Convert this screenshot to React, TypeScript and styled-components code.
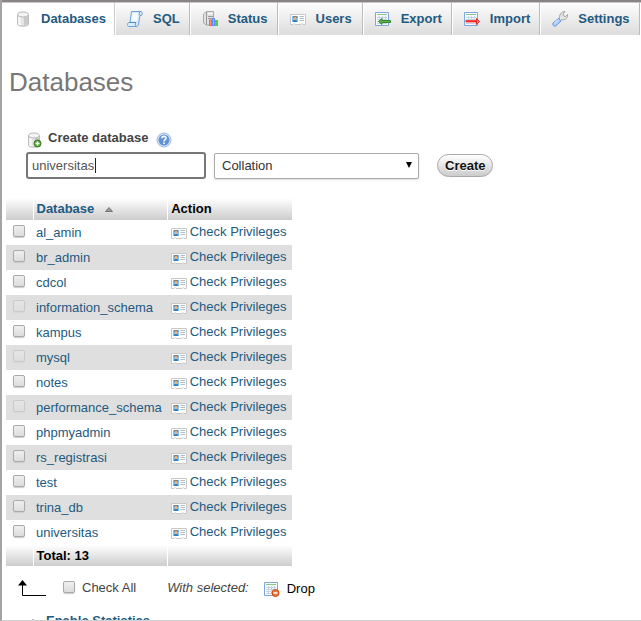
import React from 'react';
import styled, { createGlobalStyle } from 'styled-components';

const GlobalStyle = createGlobalStyle`
  * { box-sizing: border-box; }
  html { height: 100%; overflow: hidden; }
  body {
    margin: 0;
    background: #fff;
    color: #444;
    font: 13px/16px "Liberation Sans", Arial, sans-serif;
  }
  a { color: #235a81; text-decoration: none; }
  svg { display: block; flex: none; }
`;

const Page = styled.div`
  height: 100vh;
  overflow: hidden;
  border-left: 2px solid #a3a3a3;
  border-bottom: 1px solid #d0d0d0;
`;

const TabBar = styled.nav`
  display: flex;
  height: 35px;
  border-top: 2px solid #888486;
  box-shadow: inset 0 1px #c9c7c8;
  padding-top: 1px;
  white-space: nowrap;
  overflow: hidden;
`;

const Tab = styled.a<{ $active?: boolean }>`
  display: flex;
  align-items: center;
  flex: none;
  gap: 10px;
  padding: 0 9px 0 12px;
  border-right: 1px solid ${p => (p.$active ? '#ccc' : '#bbb')};
  box-shadow: ${p => (p.$active ? 'none' : 'inset 1px 0 #fff')};
  background: ${p => (p.$active ? '#fff' : 'linear-gradient(#fdfdfd, #dcdcdc)')};
  font-weight: bold;

  &:first-child { padding-left: 13px; padding-right: 8px; }
  &:nth-child(4) { padding-right: 10px; }
`;

const TabFill = styled.div`
  flex: 1;
  background: linear-gradient(#fdfdfd, #dcdcdc);
  box-shadow: inset 1px 0 #fff;
`;

const Title = styled.h1`
  margin: 32px 7px 33px;
  color: #777;
  font-size: 26px;
  line-height: 30px;
  font-weight: normal;
`;

const CreateForm = styled.form`
  margin-left: 24px;
`;

const FormHeading = styled.div`
  display: flex;
  align-items: center;
  height: 16px;
  margin-bottom: 6px;
`;

const FormLabel = styled.label`
  margin: 0 8px 0 6px;
  font-weight: bold;
`;

const HelpLink = styled.a`
  padding-top: 3px;
`;

const LoweredIcon = styled.span`
  padding-top: 3px;
`;

const FormRow = styled.div`
  display: flex;
  align-items: center;
`;

const NameField = styled.div`
  position: relative;
  width: 180px;
  margin-right: 8px;
`;

const NameInput = styled.input`
  display: block;
  width: 100%;
  height: 27px;
  padding: 0 4px;
  border: 2px solid #777;
  border-radius: 3px;
  outline: none;
  background: #fff;
  color: #555;
  font: inherit;
`;

const Caret = styled.span`
  position: absolute;
  left: 69px;
  top: 6px;
  width: 1px;
  height: 15px;
  background: #222;
`;

const SelectField = styled.div`
  position: relative;
  width: 205px;
  margin-right: 18px;
`;

const CollationSelect = styled.select`
  display: block;
  appearance: none;
  width: 100%;
  height: 26px;
  padding: 0 24px 0 7px;
  border: 1px solid #aaa;
  border-radius: 2px;
  box-shadow: 0 1px 2px #ddd;
  background: #fff;
  color: #333;
  font: inherit;
`;

const SelectArrow = styled.svg`
  position: absolute;
  right: 7px;
  top: 9px;
  pointer-events: none;
`;

const CreateButton = styled.button`
  height: 23px;
  padding: 0 7px;
  border: 1px solid #aaa;
  border-radius: 12px;
  background: linear-gradient(#fff, #ccc);
  color: #111;
  font: inherit;
  font-weight: bold;
  text-shadow: 0 1px #fff;
`;

const DatabaseTable = styled.table`
  margin: 19px 0 0 4px;
  border-collapse: collapse;
`;

const HeadCell = styled.th`
  height: 22px;
  padding: 0 3px;
  background: linear-gradient(#fff, #ccc);
  color: #000;
  text-align: left;
  line-height: 18px;

  & + & { border-left: 1px solid #fff; }
`;

const TotalCell = styled(HeadCell)`
  height: 21px;
`;

const SortLink = styled.a`
  display: inline-flex;
  align-items: center;
  gap: 11px;
`;

const Row = styled.tr`
  height: 25px;
  background: #fff;

  &:nth-child(even) { background: #dfdfdf; }
`;

const CheckCell = styled.td`
  width: 27px;
  padding: 0 0 3px 7px;
`;

const NameCell = styled.td`
  padding: 1px 6px 0 3px;
`;

const ActionCell = styled.td`
  padding: 0 5px 2px 3px;
`;

const PrivilegeLink = styled.a`
  display: flex;
  align-items: center;
  gap: 3px;

  svg { margin-top: 3px; }
`;

const Checkbox = styled.input`
  display: block;
  appearance: none;
  width: 12px;
  height: 12px;
  margin: 0;
  border: 1px solid #aaa;
  border-radius: 2px;
  background: linear-gradient(#efefef, #dcdcdc);
  box-shadow: 0 1px 1px #ccc;

  &:disabled { opacity: 0.4; }
  &:checked { background: #235a81; }
`;

const BulkRow = styled.div`
  display: flex;
  align-items: center;
  height: 20px;
  margin: 12px 0 0 15px;
`;

const CheckAll = styled.label`
  display: flex;
  align-items: center;
  gap: 7px;
  margin: 0 31px 0 17px;

  input { margin-bottom: 3px; }
`;

const WithSelected = styled.i`
  margin-right: 15px;
`;

const DropButton = styled.button`
  display: flex;
  align-items: center;
  gap: 7px;
  padding: 2px 0 0;
  border: 0;
  background: none;
  color: #000;
  font: inherit;
`;

const Statistics = styled.ul`
  margin: 15px 0 0 27px;
  padding: 0;
  list-style: none;
`;

const StatisticsLink = styled.a`
  display: flex;
  align-items: center;
  gap: 9px;
  font-weight: bold;

  svg { margin-top: 5px; }
`;

type IconName = 'database' | 'sql' | 'status' | 'users' | 'export' | 'import' | 'settings' | 'newdb' | 'help' | 'drop';

const Cylinder = () => (
  <>
    <path d="M2.500 4v9c0 3 11 3 11 0V4z" fill="#e4e4e4" stroke="#bdbdbd" />
    <path d="M4 6v8M5 6v8" stroke="#fff" />
    <path d="M10 6v8.500M12 6v7.500" stroke="#c9c9c9" strokeWidth="2" />
    <ellipse cx="8" cy="3.500" rx="5.500" ry="2.500" fill="#f4f4f4" stroke="#b8b8b8" />
  </>
);

const Sheet = () => (
  <>
    <path d="M.5 1.500h13v13H.5z" fill="#f7fbff" stroke="#7da7dc" />
    <path d="M2 3.500h10" stroke="#8cc58a" />
    <path d="M2 6.500h10M2 8.500h10M2 10.500h10M2 12.500h10M4.500 5v8M7.500 5v8M10.500 5v8" stroke="#c4d2e2" />
  </>
);

const drawings: Record<IconName, React.ReactNode> = {
  database: <Cylinder />,
  sql: (
    <>
      <path d="M4.500 .5h9.500c1.800 0 1.800 4 0 4h-1L11.500 13c-.3 1.800-1 2.500-2 2.500H2c-2 0-2-4 0-4h1z" fill="#dcecfb" stroke="#6ba0da" />
      <path d="M13 4.500c-1.300-.5-1-3.500.5-4M2.500 11.500H9c-1 1.300-.8 3 .5 4" fill="none" stroke="#4f8dd0" />
      <path d="M5.500 2h5.800L9.800 10H4.300z" fill="#f5faff" />
    </>
  ),
  status: (
    <>
      <path d="M1.500 3l3-2.500h7V14h-7l-3-2z" fill="#e2e2e2" stroke="#aaa" />
      <path d="M4.500 1v13M6 5.500h5M6 7.500h4" stroke="#999" />
      <path d="M6 2.500h4.500" stroke="#fff" />
      <path d="M7 8.500h3V15H7z" fill="#ff5b42" />
      <path d="M10 7h3v8h-3z" fill="#5d91ff" />
      <path d="M13 9h3v6h-3z" fill="#55c94b" />
      <path d="M8.500 9.500V14" stroke="#ff9a78" />
      <path d="M11.500 8v6" stroke="#8db3ff" />
    </>
  ),
  users: (
    <>
      <path d="M.5 3.500h15v10H13l-1-1-1 1H5l-1-1-1 1H.5z" fill="#fff" stroke="#c8c8c8" />
      <path d="M2 5h6v6H2z" fill="#7cc2f7" />
      <path d="M3 11v-1.500l1-.5h2l1 .5V11z" fill="#347fc1" />
      <path d="M4 6h2v3H4z" fill="#e9ae80" />
      <path d="M3.500 7V5.500h3V7" fill="none" stroke="#8a6a50" strokeWidth=".8" />
      <path d="M9.500 5.500H14M9.500 7.500H14M9.500 9.500H14" stroke="#afbdca" />
    </>
  ),
  export: (
    <>
      <Sheet />
      <path d="M3.500 10.500l3.500-3v2h8.500v2H7v2z" fill="#5fae52" stroke="#348b32" strokeLinejoin="round" />
    </>
  ),
  import: (
    <>
      <Sheet />
      <path d="M1.500 9.500H12" stroke="#ee5048" />
      <path d="M1.500 10.500H15" stroke="#f22" />
      <path d="M12.500 7.500l3 3-3 3z" fill="#ff7770" stroke="#e62828" strokeLinejoin="round" />
      <path d="M1.500 11.500H12" stroke="#f9aaa5" />
    </>
  ),
  settings: (
    <>
      <path d="M7.500 8.500C7 4 9 .5 13 .5L11 3l.5 2 2 .5 2-2c.5 4-3 6-6 5L8.500 10z" fill="#e6e6e6" stroke="#a4a4a4" />
      <path d="M6.500 7.500l2.500 2.500-5 5c-2 1-4-1-3-3z" fill="#a7caf7" stroke="#6c98dc" />
      <path d="M2.500 12.500L6 9" stroke="#d0e2fb" strokeWidth="1.500" />
    </>
  ),
  newdb: (
    <>
      <Cylinder />
      <circle cx="11.500" cy="11.500" r="3.500" fill="#57a739" stroke="#36781f" />
      <path d="M9.500 11.500h4M11.500 9.500v4" stroke="#fff" strokeWidth="1.500" />
    </>
  ),
  help: (
    <>
      <circle cx="8" cy="8" r="7" fill="#dbe7f6" stroke="#8ba9cf" strokeWidth=".8" />
      <circle cx="8" cy="8" r="5.500" fill="#6093d3" />
      <path d="M5.800 6.200C6 3.500 10.500 4 10 6.500 9.700 7.800 8 7.700 8 9.500M8 10.500V12" fill="none" stroke="#fff" strokeWidth="1.600" />
    </>
  ),
  drop: (
    <>
      <Sheet />
      <circle cx="11.500" cy="12" r="3.500" fill="#f07832" stroke="#c84912" />
      <path d="M9.500 12h4" stroke="#fff" strokeWidth="1.500" />
    </>
  ),
};

const Icon = ({ name }: { name: IconName }) => (
  <svg width="16" height="16" viewBox="0 0 16 16" fill="none" aria-hidden="true">{drawings[name]}</svg>
);

const tabs: { label: string; icon: IconName }[] = [
  { label: 'Databases', icon: 'database' },
  { label: 'SQL', icon: 'sql' },
  { label: 'Status', icon: 'status' },
  { label: 'Users', icon: 'users' },
  { label: 'Export', icon: 'export' },
  { label: 'Import', icon: 'import' },
  { label: 'Settings', icon: 'settings' },
];

const databases = [
  'al_amin', 'br_admin', 'cdcol', 'information_schema', 'kampus', 'mysql', 'notes',
  'performance_schema', 'phpmyadmin', 'rs_registrasi', 'test', 'trina_db', 'universitas',
];
const systemDatabases = ['information_schema', 'mysql', 'performance_schema'];

export default function App() {
  return (
    <Page>
      <GlobalStyle />
      <TabBar>
        {tabs.map((tab, i) => (
          <Tab key={tab.label} href="#" $active={i === 0}><Icon name={tab.icon} />{tab.label}</Tab>
        ))}
        <TabFill />
      </TabBar>
      <main>
        <Title>Databases</Title>
        <CreateForm onSubmit={e => e.preventDefault()}>
          <FormHeading>
            <LoweredIcon><Icon name="newdb" /></LoweredIcon>
            <FormLabel htmlFor="new-db">Create database</FormLabel>
            <HelpLink href="#" aria-label="Documentation"><Icon name="help" /></HelpLink>
          </FormHeading>
          <FormRow>
            <NameField>
              <NameInput id="new-db" defaultValue="universitas" />
              <Caret />
            </NameField>
            <SelectField>
              <CollationSelect aria-label="Collation"><option>Collation</option></CollationSelect>
              <SelectArrow width="6" height="6" viewBox="0 0 6 6"><path d="M0 0h6L3 6z" fill="#000" /></SelectArrow>
            </SelectField>
            <CreateButton type="submit">Create</CreateButton>
          </FormRow>
        </CreateForm>
        <DatabaseTable>
          <thead>
            <tr>
              <HeadCell />
              <HeadCell>
                <SortLink href="#">
                  Database
                  <svg width="8" height="5" viewBox="0 0 8 5"><path d="M.5 4.500L4 .5l3.500 4z" fill="#999" stroke="#777" /></svg>
                </SortLink>
              </HeadCell>
              <HeadCell>Action</HeadCell>
            </tr>
          </thead>
          <tbody>
            {databases.map(name => (
              <Row key={name}>
                <CheckCell><Checkbox type="checkbox" aria-label={name} disabled={systemDatabases.includes(name)} /></CheckCell>
                <NameCell><a href="#">{name}</a></NameCell>
                <ActionCell><PrivilegeLink href="#"><Icon name="users" />Check Privileges</PrivilegeLink></ActionCell>
              </Row>
            ))}
          </tbody>
          <tfoot>
            <tr><TotalCell /><TotalCell>Total: 13</TotalCell><TotalCell /></tr>
          </tfoot>
        </DatabaseTable>
        <BulkRow>
          <svg width="29" height="17" viewBox="0 0 29 17"><path d="M5.500 3v12.500H29" fill="none" stroke="#000" /><path d="M1 5.500L5.500 0 10 5.500z" fill="#000" /></svg>
          <CheckAll><Checkbox type="checkbox" />Check All</CheckAll>
          <WithSelected>With selected:</WithSelected>
          <DropButton type="button"><Icon name="drop" />Drop</DropButton>
        </BulkRow>
        <Statistics>
          <li>
            <StatisticsLink href="#">
              <svg width="8" height="10" viewBox="0 0 8 10"><path d="M1 9V3l3-3 3 3v6z" fill="#777" /></svg>
              Enable Statistics
            </StatisticsLink>
          </li>
        </Statistics>
      </main>
    </Page>
  );
}
